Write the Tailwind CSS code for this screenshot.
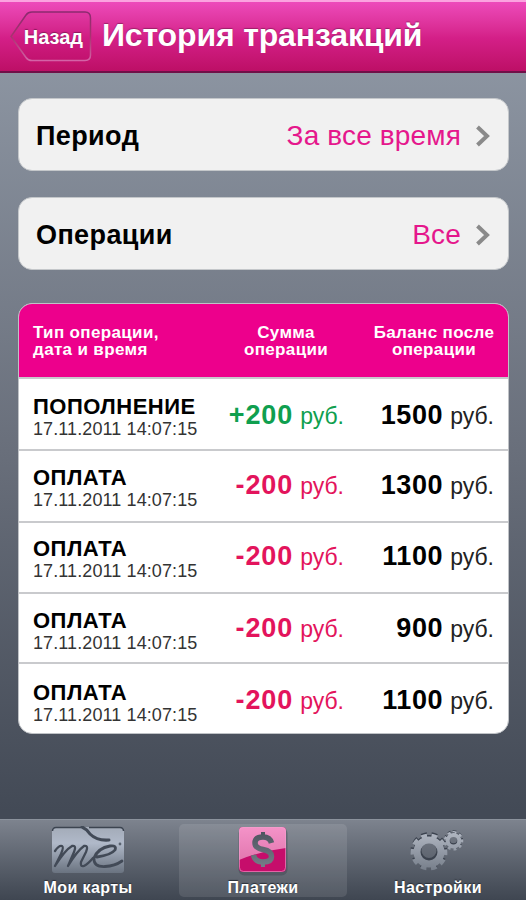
<!DOCTYPE html>
<html lang="ru">
<head>
  <meta charset="UTF-8">
  <title>История транзакций</title>
  <meta name="viewport" content="width=device-width, initial-scale=1.0">
  <script src="https://cdn.jsdelivr.net/npm/@tailwindcss/browser@4"></script>
</head>

<body class="font-['Liberation_Sans',Arial,sans-serif] w-[526px] h-[900px] overflow-hidden flex flex-col bg-linear-to-b from-[#929ba8] via-[#696f7b] to-[#434a56] to-90% text-black">

  <!-- Шапка -->
  <header class="h-[73px] shrink-0 flex items-center pl-[10px] pb-px border-t-2 border-t-[#fba3e0] border-b-2 border-b-[#6f1048] bg-linear-to-b from-[#ed4abb] via-[#d41f88] via-52% to-[#bd0f66] text-white">
    <button class="relative w-[82px] h-[51px] flex items-center justify-end pr-[9px]">
      <svg class="absolute inset-0" width="82" height="51" viewBox="0 0 82 51" fill="none">
        <defs>
          <linearGradient id="backStroke" x1="0" y1="0" x2="0" y2="1">
            <stop offset="0" stop-color="#8b2a6e"/>
            <stop offset="0.5" stop-color="#a8336f"/>
            <stop offset="1" stop-color="#d463a6"/>
          </linearGradient>
        </defs>
        <path d="M1 25.500 16 4Q18 1 22 1H75Q80.500 1 80.500 7V44Q80.500 49.500 75 49.500H22Q18 49.500 16 46.500Z" fill="#b0005c" fill-opacity=".1" stroke="url(#backStroke)" stroke-width="1.500"/>
      </svg>
      <span class="relative top-px text-[20px] font-bold leading-none [text-shadow:0_-1px_1px_#8a1a5c]">Назад</span>
    </button>
    <h1 class="ml-[10px] pb-[2px] text-[32px] font-bold leading-none tracking-[-0.15px] whitespace-nowrap [text-shadow:0_-1px_1px_#9c2068]">История транзакций</h1>
  </header>

  <main class="flex-1 px-[18px] pt-[25px] flex flex-col">
    <!-- Фильтры -->
    <div class="flex flex-col gap-[26px]">
      <div class="h-[73px] w-[491px] rounded-[14px] bg-[#f1f1f1] border border-[#c4c7ca] flex items-center pt-[3px] pl-[17px] pr-[18px]">
        <span class="text-[27px] font-bold tracking-[0.4px]">Период</span>
        <span class="ml-auto text-[28px] tracking-[0.15px] text-[#e5178c]">За все время</span>
        <svg class="ml-[15px]" width="14" height="22" viewBox="0 0 14 22" fill="none" stroke="#8a8a8a" stroke-width="4"><path d="M1.500 2 11 11 1.500 20"/></svg>
      </div>
      <div class="h-[73px] w-[491px] rounded-[14px] bg-[#f1f1f1] border border-[#c4c7ca] flex items-center pt-[3px] pl-[17px] pr-[18px]">
        <span class="text-[27px] font-bold tracking-[0.4px]">Операции</span>
        <span class="ml-auto text-[28px] tracking-[0.15px] text-[#e5178c]">Все</span>
        <svg class="ml-[15px]" width="14" height="22" viewBox="0 0 14 22" fill="none" stroke="#8a8a8a" stroke-width="4"><path d="M1.500 2 11 11 1.500 20"/></svg>
      </div>
    </div>

    <!-- Таблица операций -->
    <section class="mt-[33px] w-[491px] h-[431px] rounded-[14px] overflow-hidden bg-white border border-[#bfc2c6] flex flex-col">
      <div class="h-[73px] shrink-0 bg-[#ed008c] text-white text-[17px] leading-[17px] tracking-[0.35px] font-bold flex items-center pt-px">
        <div class="w-[200px] pl-[14px]">Тип операции,<br>дата и время</div>
        <div class="w-[134px] text-center">Сумма<br>операции</div>
        <div class="flex-1 text-center pl-[7px] whitespace-nowrap">Баланс после<br>операции</div>
      </div>
      <div id="rows" class="flex-1 grid grid-rows-[72px_72px_71px_70px_71px]"></div>
    </section>
  </main>

  <!-- Нижняя панель -->
  <nav class="h-[81px] shrink-0 grid grid-cols-[176px_174px_176px] border-t border-[#8b929c] bg-linear-to-b from-[#7d838e] to-[#3f4651] text-white text-[16px] font-bold leading-none tracking-[0.4px] [text-shadow:0_-1px_1px_#2a2f38]">
    <a class="flex flex-col items-center pt-[6px]">
      <svg width="74" height="47" viewBox="0 0 74 47" fill="none">
        <defs>
          <linearGradient id="steel" x1="0" y1="0" x2="0" y2="1">
            <stop offset="0" stop-color="#a3abb8"/>
            <stop offset="0.35" stop-color="#b0b9c9"/>
            <stop offset="1" stop-color="#6a7380"/>
          </linearGradient>
        </defs>
        <rect x="1" y="1" width="72" height="46" rx="3" fill="url(#steel)"/>
        <path d="M1.500 5Q1.500 1.500 5 1.500H30M38 1.500H69Q72.500 1.500 72.500 5" stroke="#3c4450" stroke-width="1.500"/>
        <g stroke="#424a57" stroke-linecap="round" stroke-linejoin="round">
          <path d="M31 1Q36 3 39 8Q46 15 58 14" stroke-width="3"/>
          <path d="M4 25Q8 19 11 20Q13 21 10 28L4 40Q14 24 21 20Q26 19 23 26L17 40Q26 25 33 20Q38 19 35 26L30 36Q29 41 33 40Q37 38 42 32" stroke-width="2.300"/>
          <path d="M46 31Q60 29 64 24Q66 19 59 20Q47 22 43 32Q42 41 54 40.500Q64 40 71 35" stroke-width="2.800"/>
        </g>
        <circle cx="69" cy="18" r="1.400" fill="#5a6370"/>
      </svg>
      <span class="mt-[7px]">Мои карты</span>
    </a>
    <a class="mx-[3px] mt-[4px] mb-[3px] rounded-[5px] bg-white/10 flex flex-col items-center pt-[2px]">
      <svg width="52" height="50" viewBox="0 0 52 50">
        <defs>
          <linearGradient id="gloss" x1="0" y1="0" x2="0" y2="1">
            <stop offset="0" stop-color="#f493c8"/>
            <stop offset="1" stop-color="#e278b0"/>
          </linearGradient>
          <linearGradient id="dollar" x1="0" y1="0" x2="0" y2="46" gradientUnits="userSpaceOnUse">
            <stop offset="0" stop-color="#464d58"/>
            <stop offset="1" stop-color="#7c838e"/>
          </linearGradient>
        </defs>
        <rect x="1.500" y="1.500" width="49" height="48" rx="6" fill="#3c3f4a" fill-opacity=".4"/>
        <rect x="2" y="1" width="47" height="45" rx="4" fill="#c60d6b"/>
        <path d="M2 5Q2 1 6 1H45Q49 1 49 5V22Q24 25 2 34Z" fill="url(#gloss)"/>
        <rect x="2.500" y="1.500" width="46" height="44" rx="4" fill="none" stroke="#f3a0cd" stroke-opacity=".6"/>
        <path d="M34.500 17Q33 11 26 11Q18 11 18 17Q18 22 26 23.500Q34.500 25 34.500 30.500Q34.500 36 26 36Q18 36 16.500 29" fill="none" stroke="url(#dollar)" stroke-width="5.500"/>
        <path d="M24 6H28V12H24ZM24 36H28V41H24Z" fill="url(#dollar)"/>
      </svg>
      <span class="mt-[4px]">Платежи</span>
    </a>
    <a class="flex flex-col items-center pt-[10px]">
      <svg class="mr-[2px]" width="56" height="42" viewBox="0 0 56 42" fill="none">
        <defs>
          <linearGradient id="gear" x1="0" y1="0" x2="0" y2="42" gradientUnits="userSpaceOnUse">
            <stop offset="0" stop-color="#b4bac5"/>
            <stop offset="1" stop-color="#747c88"/>
          </linearGradient>
        </defs>
        <!-- тень шестерёнок -->
        <g stroke="#3b424e">
          <circle cx="20" cy="20.500" r="11.500" stroke-width="8"/>
          <circle cx="20" cy="20.500" r="16.500" stroke-width="4" pathLength="20" stroke-dasharray="1.100 .9" stroke-dashoffset=".5"/>
          <circle cx="44.500" cy="9.700" r="5.500" stroke-width="4"/>
          <circle cx="44.500" cy="9.700" r="8.300" stroke-width="2.500" pathLength="18" stroke-dasharray="1 1" stroke-dashoffset=".5"/>
        </g>
        <g stroke="url(#gear)">
          <circle cx="20" cy="22" r="12" stroke-width="7"/>
          <circle cx="20" cy="22" r="16.500" stroke-width="4" pathLength="20" stroke-dasharray="1.100 .9" stroke-dashoffset=".5"/>
          <circle cx="44.500" cy="10.800" r="5.800" stroke-width="4"/>
          <circle cx="44.500" cy="10.800" r="8.500" stroke-width="2.500" pathLength="18" stroke-dasharray="1 1" stroke-dashoffset=".5"/>
        </g>
      </svg>
      <span class="mt-[8px]">Настройки</span>
    </a>
  </nav>

  <script>
    // Список операций
    const operations = [
      { type: 'ПОПОЛНЕНИЕ', sum: '+200', balance: '1500', pad: 'pt-[2px]' },
      { type: 'ОПЛАТА', sum: '-200', balance: '1300', pad: 'pb-px' },
      { type: 'ОПЛАТА', sum: '-200', balance: '1100', pad: 'pb-[2px]' },
      { type: 'ОПЛАТА', sum: '-200', balance: '900', pad: 'pt-px' },
      { type: 'ОПЛАТА', sum: '-200', balance: '1100', pad: 'pt-[4px]' },
    ];

    document.getElementById('rows').innerHTML = operations.map(o => `
      <div class="flex items-center border-t-2 border-[#c9cacd] px-[14px] ${o.pad}">
        <div class="w-[170px] pt-[6px]">
          <div class="text-[22px] leading-[23px] tracking-[0.5px] font-bold">${o.type}</div>
          <div class="text-[18px] leading-[23px] tracking-[0.1px] text-[#333] whitespace-nowrap">17.11.2011 14:07:15</div>
        </div>
        <div class="w-[141px] text-right whitespace-nowrap ${o.sum[0] === '+' ? 'text-[#0f9f4f]' : 'text-[#e3145c]'}">
          <b class="text-[27px] tracking-[0.9px]">${o.sum}</b><span class="text-[23px] ml-[7px]">руб.</span>
        </div>
        <div class="flex-1 text-right whitespace-nowrap">
          <b class="text-[27px] tracking-[0.6px]">${o.balance}</b><span class="text-[23px] ml-[7px] text-[#222]">руб.</span>
        </div>
      </div>`).join('');
  </script>
</body>
</html>
